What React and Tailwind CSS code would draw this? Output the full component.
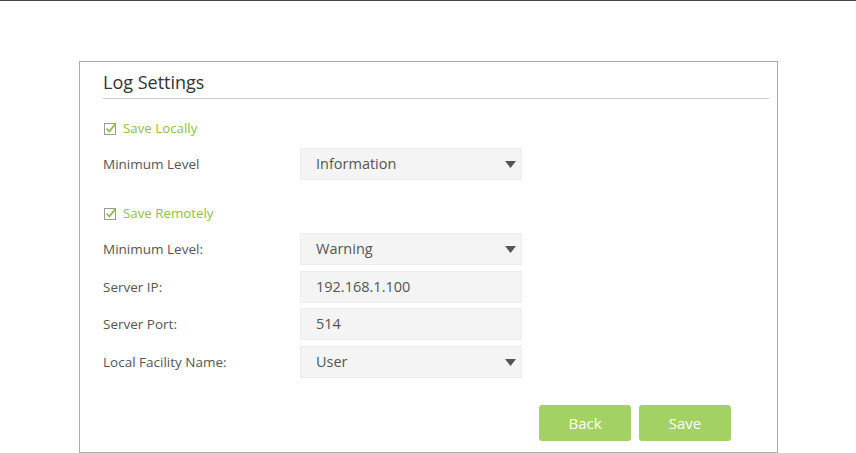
import { useState } from 'react';

const font = { fontFamily: '"Open Sans", "Liberation Sans", sans-serif' };

function Check({ label }) {
  return (
    <div className="flex items-center h-[20px] gap-[6px]">
      <svg width="14" height="14" viewBox="0 0 14 14" className="shrink-0">
        <rect x="1.5" y="1.5" width="11" height="11" fill="none" stroke="#9a9a9a" strokeWidth="1" />
        <path d="M3.5 6.5 L6.5 9.5 L12.5 1.5" fill="none" stroke="#86bd3b" strokeWidth="1.7" />
      </svg>
      <span className="text-[13.3px] text-[#8cc142]">{label}</span>
    </div>
  );
}

function Caret() {
  return (
    <svg width="11" height="7" viewBox="0 0 11 7" className="shrink-0">
      <path d="M0 0 L11 0 L5.5 7 Z" fill="#555" />
    </svg>
  );
}

function Row({ label, value, select, className = '' }) {
  return (
    <div className={`flex items-center h-[32px] ${className}`}>
      <div className="w-[197px] text-[13.5px] text-[#555]">{label}</div>
      <div className="w-[222px] h-[32px] flex items-center justify-between pl-[15px] pr-[5px] bg-[#f4f4f4] border border-[#ebebeb] text-[14.5px] text-[#555]">
        <span>{value}</span>
        {select && <Caret />}
      </div>
    </div>
  );
}

export default function App() {
  const [saving] = useState(false);
  return (
    <div className="w-[856px] h-[453px] bg-white border-t border-[#444] overflow-hidden" style={font}>
      <div className="ml-[79px] mt-[60px] w-[699px] h-[392px] border border-[#aaa] pl-[23px] pr-[8px]">
        <div className="pt-[10px] pb-[6px] border-b border-[#ccc]">
          <div className="h-[20px] leading-[20px] text-[18px] text-[#333]">Log Settings</div>
        </div>

        <div className="mt-[20px]"><Check label="Save Locally" /></div>
        <Row className="mt-[9px]" label="Minimum Level" value="Information" select />

        <div className="mt-[24px]"><Check label="Save Remotely" /></div>
        <Row className="mt-[9px]" label="Minimum Level:" value="Warning" select />
        <Row className="mt-[6px]" label="Server IP:" value="192.168.1.100" />
        <Row className="mt-[5px]" label="Server Port:" value="514" />
        <Row className="mt-[6px]" label="Local Facility Name:" value="User" select />

        <div className="mt-[27px] flex justify-end gap-[8px] pr-[38px]">
          <button className="w-[92px] h-[36px] rounded-[3px] bg-[#a3d164] text-white text-[15px]">Back</button>
          <button disabled={saving} className="w-[92px] h-[36px] rounded-[3px] bg-[#a3d164] text-white text-[15px]">Save</button>
        </div>
      </div>
    </div>
  );
}
